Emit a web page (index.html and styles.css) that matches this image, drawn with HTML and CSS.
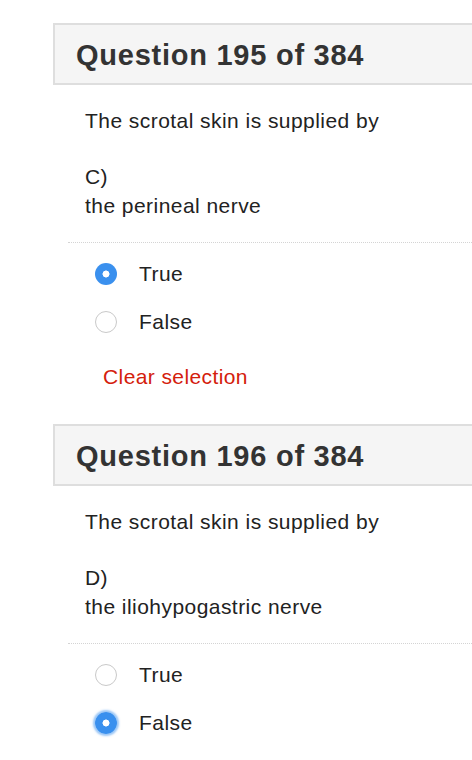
FILE: index.html
```html
<!DOCTYPE html>
<html>
<head>
<meta charset="utf-8">
<link rel="stylesheet" href="styles.css">
</head>
<body>
<main class="quiz">
  <section class="question">
    <header class="q-head"><h2>Question 195 of 384</h2></header>
    <div class="q-body">
      <p class="stem">The scrotal skin is supplied by</p>
      <p class="option">C)<br>the perineal nerve</p>
    </div>
    <div class="answers">
      <label class="answer"><span class="radio checked"></span><span>True</span></label>
      <label class="answer"><span class="radio"></span><span>False</span></label>
    </div>
    <a class="clear">Clear selection</a>
  </section>
  <section class="question last">
    <header class="q-head"><h2>Question 196 of 384</h2></header>
    <div class="q-body">
      <p class="stem">The scrotal skin is supplied by</p>
      <p class="option">D)<br>the iliohypogastric nerve</p>
    </div>
    <div class="answers">
      <label class="answer"><span class="radio"></span><span>True</span></label>
      <label class="answer"><span class="radio checked focus"></span><span>False</span></label>
    </div>
  </section>
</main>
</body>
</html>
```
FILE: styles.css
```css
html, body {
  margin: 0;
  padding: 0;
  background: #fff;
}
body {
  font-family: "Liberation Sans", Arial, Helvetica, sans-serif;
  color: #222;
  overflow: hidden;
  width: 472px;
  height: 760px;
}
.quiz {
  padding: 23px 0 0 53px;
  display: flex;
  flex-direction: column;
}
.question {
  display: flex;
  flex-direction: column;
  height: 401px;
}
.question.last {
  height: auto;
}
.q-head {
  border: 2px solid #dedede;
  border-right: none;
  background: #f5f5f5;
  display: flex;
  align-items: center;
  padding: 3px 0 0 21px;
  box-sizing: content-box;
  height: 55px;
}
.q-head h2 {
  margin: 0;
  font-size: 29px;
  font-weight: bold;
  color: #333;
  letter-spacing: 0.75px;
}
.q-body {
  padding: 21px 0 0 32px;
}
.q-body p {
  margin: 0;
  font-size: 21px;
  line-height: 29px;
  letter-spacing: 0.45px;
}
.stem {
  margin-bottom: 27px !important;
}
.answers {
  margin: 22px 0 0 15px;
  border-top: 1.5px dotted #d4d4d4;
  padding-top: 7px;
  display: flex;
  flex-direction: column;
}
.answer {
  height: 48px;
  display: flex;
  align-items: center;
  font-size: 21px;
  letter-spacing: 0.45px;
  color: #222;
  padding-left: 27px;
}
.radio {
  flex: none;
  width: 22px;
  height: 22px;
  box-sizing: border-box;
  border: 1.5px solid #c9c9c9;
  border-radius: 50%;
  margin-right: 22px;
  background: #fff;
}
.radio.checked {
  border: none;
  background: radial-gradient(circle, #fff 0 3.2px, #3a90ee 3.8px);
}
.radio.focus {
  box-shadow: 0 0 2px 2px rgba(58, 144, 238, 0.5);
}
.clear {
  margin: 16px 0 0 50px;
  font-size: 21px;
  letter-spacing: 0.4px;
  line-height: 29px;
  color: #d4200c;
}
```
